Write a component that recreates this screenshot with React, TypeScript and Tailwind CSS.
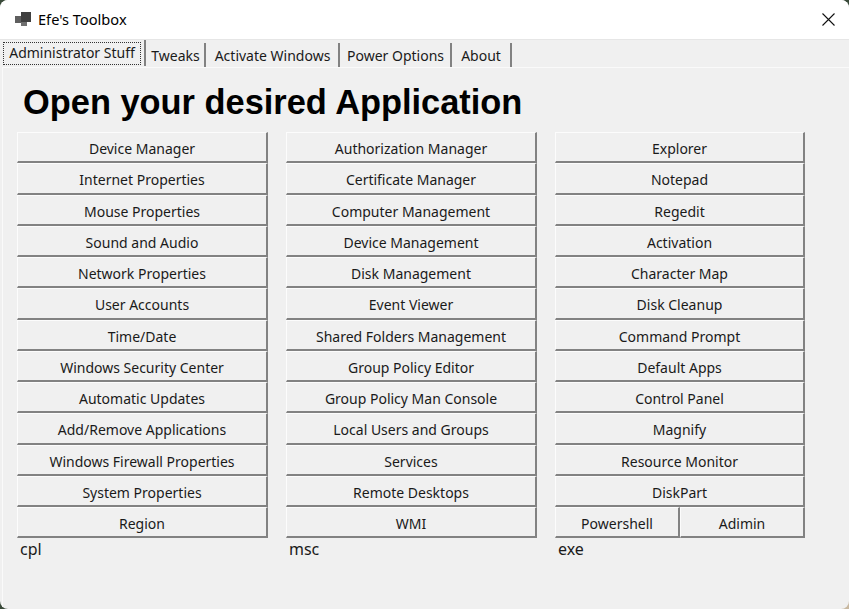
const COL_CPL = ["Device Manager", "Internet Properties", "Mouse Properties", "Sound and Audio", "Network Properties", "User Accounts", "Time/Date", "Windows Security Center", "Automatic Updates", "Add/Remove Applications", "Windows Firewall Properties", "System Properties", "Region"];
const COL_MSC = ["Authorization Manager", "Certificate Manager", "Computer Management", "Device Management", "Disk Management", "Event Viewer", "Shared Folders Management", "Group Policy Editor", "Group Policy Man Console", "Local Users and Groups", "Services", "Remote Desktops", "WMI"];
const COL_EXE = ["Explorer", "Notepad", "Regedit", "Activation", "Character Map", "Disk Cleanup", "Command Prompt", "Default Apps", "Control Panel", "Magnify", "Resource Monitor", "DiskPart"];

const TABS = [
  { label: "Tweaks", width: "w-[60px] pl-[1px]" },
  { label: "Activate Windows", width: "w-[134px] pl-[1px]" },
  { label: "Power Options", width: "w-[112px] pl-[1px]" },
  { label: "About", width: "w-[60px]" },
];

function Btn({ label, className = "" }: { label: string; className?: string }) {
  return (
    <button className={`h-[31.25px] pt-[3px] flex items-center justify-center bg-[#f0f0f0] border-t border-l border-t-[#fcfcfc] border-l-[#fcfcfc] border-r-2 border-b-2 border-r-[#828282] border-b-[#828282] text-[#1a1a1a] ${className}`}>
      {label}
    </button>
  );
}

function Column({ items, tag, className = "w-[251px]", children }: { items: string[]; tag: string; className?: string; children?: React.ReactNode }) {
  return (
    <div className={`flex flex-col ${className}`}>
      {items.map((name) => (
        <Btn key={name} label={name} />
      ))}
      {children}
      <span className="pl-[3px] pt-[1px] leading-[21px] text-[16px] text-[#1a1a1a]">{tag}</span>
    </div>
  );
}

export default function App() {
  return (
    <div className="w-[849px] h-[609px] bg-[linear-gradient(135deg,#3a4a3a_85%,#c8b8a0_85%)] overflow-hidden text-[14px]" style={{ fontFamily: '"Noto Sans", "Open Sans", sans-serif' }}>
      <div className="w-full h-full rounded-[8px] overflow-hidden bg-[#f0f0f0] flex flex-col">
        {/* Title bar */}
        <div className="h-[40px] bg-white flex items-center pl-[15px] border-b border-[#e6e6e6] shrink-0">
          <svg width="16" height="14" viewBox="0 0 16 14" className="mr-[7px] mb-[2px]">
            <rect x="6" y="0" width="10" height="10" fill="#3f3f3f" />
            <rect x="0" y="4" width="6" height="7" fill="#5f5f5f" />
            <rect x="6" y="10" width="6" height="4" fill="#6f6f6f" />
          </svg>
          <span className="text-black text-[14.6px]">Efe's Toolbox</span>
          <svg width="13" height="13" viewBox="0 0 13 13" className="ml-auto mr-[14px]">
            <path d="M0.5 0.5 L12.5 12.5 M12.5 0.5 L0.5 12.5" stroke="#111" strokeWidth="1.1" fill="none" />
          </svg>
        </div>

        {/* Tab strip */}
        <div className="h-[27px] flex items-stretch pl-[3px] shrink-0 text-[#1a1a1a]">
          <div className="w-[143px] h-[26px] -mb-px flex items-center border-r-2 border-r-[#828282]">
            <span className="w-[138px] h-[23px] flex items-center justify-center border border-dotted border-[#333] leading-none">Administrator Stuff</span>
          </div>
          {TABS.map((t) => (
            <div key={t.label} className={`mt-[3px] flex items-center justify-center border-r-2 border-r-[#828282] ${t.width}`}>{t.label}</div>
          ))}
        </div>

        {/* Page body */}
        <div className="ml-[2px] pl-[14px] flex-1 border-t border-l border-[#fafafa]">
          <h1 className="pl-[6px] h-[64px] pt-[12px] text-[34.4px] leading-[44px] font-bold text-black" style={{ fontFamily: '"Liberation Sans", Arial, sans-serif' }}>
            Open your desired Application
          </h1>
          <div className="flex gap-[18px]">
            <Column items={COL_CPL} tag="cpl" />
            <Column items={COL_MSC} tag="msc" />
            <Column items={COL_EXE} tag="exe" className="w-[250px]">
              <div className="flex">
                <Btn label="Powershell" className="w-[125px]" />
                <Btn label="Adimin" className="flex-1" />
              </div>
            </Column>
          </div>
        </div>
      </div>
    </div>
  );
}
